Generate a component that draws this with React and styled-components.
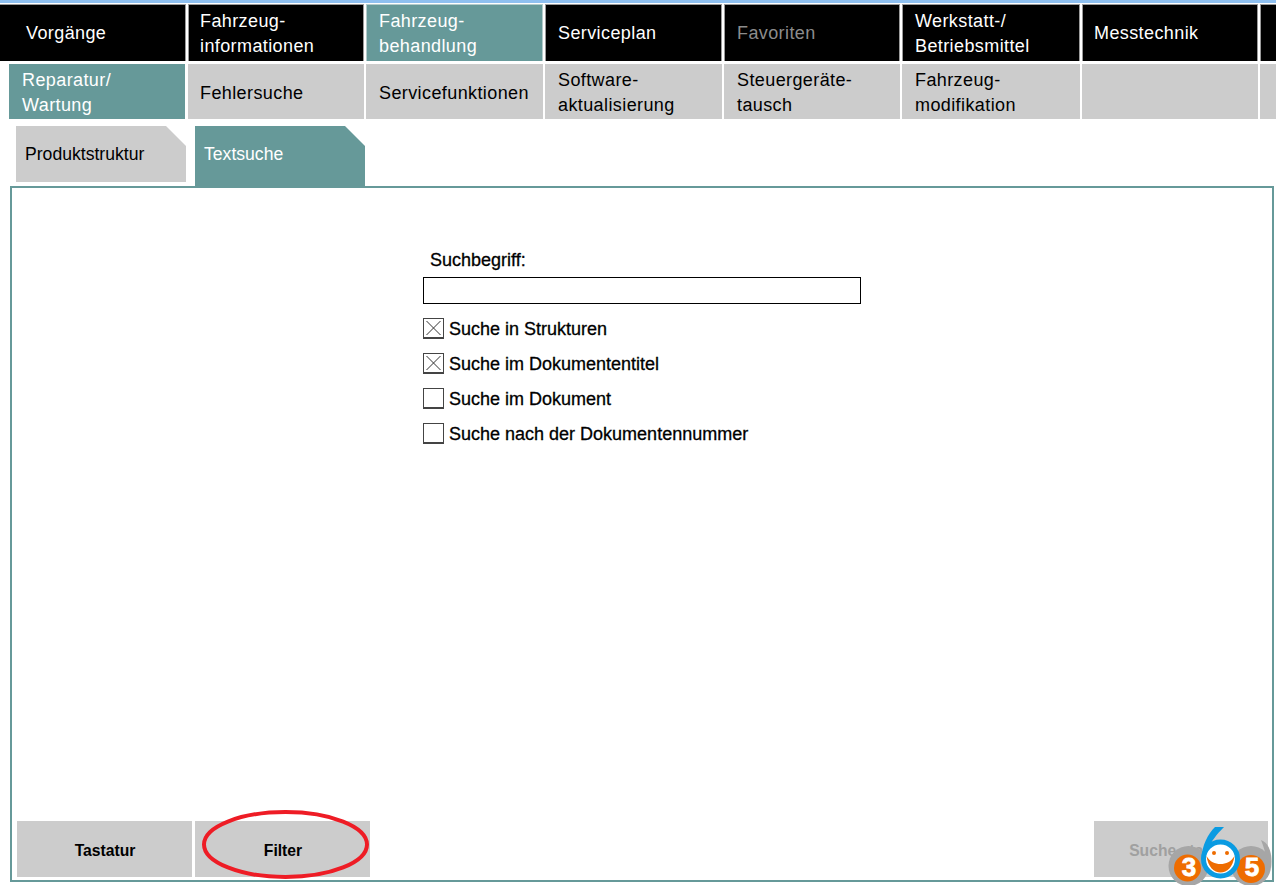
import React from "react";
import styled, { createGlobalStyle } from "styled-components";

const Global = createGlobalStyle`
  html, body { margin: 0; padding: 0; background: #fff; overflow: hidden; }
  body { font-family: "Liberation Sans", Arial, sans-serif; color: #000; }
`;

const widths = "188px 178px 179px 179px 178px 180px 178px 178px";

const Page = styled.div`
  position: relative;
  width: 1276px;
  height: 885px;
  overflow: hidden;
  display: flex;
  flex-direction: column;
  border-top: 3px solid #8fc0f0;
  box-sizing: border-box;
`;

const MainNav = styled.nav`
  display: grid;
  grid-template-columns: ${widths};
  height: 57px;
  margin-top: 1px;
`;

const MainItem = styled.div`
  margin-right: 2px;
  background: ${(p) => (p.$active ? "#669999" : "#000")};
  color: ${(p) => (p.$muted ? "#8c8c8c" : "#fff")};
  font-size: 18px;
  letter-spacing: 0.4px;
  line-height: 25px;
  padding: 1px 0 0 ${(p) => (p.$first ? "26px" : p.$inset ? "12px" : "11px")};
  display: flex;
  align-items: center;
  white-space: pre-line;
  border: 1px solid ${(p) => (p.$active ? "#b5cccc" : "#9a9a9a")};
  border-bottom: none;
  border-left-width: ${(p) => (p.$first ? "0" : "1px")};
  box-sizing: border-box;
`;

const SubNav = styled.nav`
  display: grid;
  grid-template-columns: ${widths};
  height: 55px;
  margin-top: 3px;
`;

const SubItem = styled.div`
  margin-right: ${(p) => (p.$first ? "3px" : "2px")};
  margin-left: ${(p) => (p.$first ? "9px" : "0")};
  background: ${(p) => (p.$active ? "#669999" : "#cccccc")};
  color: ${(p) => (p.$active ? "#fff" : "#000")};
  font-size: 18px;
  letter-spacing: 0.4px;
  line-height: 25px;
  padding: 3px 0 0 ${(p) => (p.$first ? "13px" : p.$inset ? "13px" : "12px")};
  display: flex;
  align-items: center;
  white-space: pre-line;
  box-sizing: border-box;
`;

const Tabs = styled.div`
  display: flex;
  align-items: flex-start;
  height: 66px;
  margin-top: 7px;
  padding-left: 16px;
  gap: 9px;
`;

const Tab = styled.div`
  width: 170px;
  height: ${(p) => (p.$active ? "60px" : "56px")};
  background: ${(p) => (p.$active ? "#669999" : "#cccccc")};
  color: ${(p) => (p.$active ? "#fff" : "#000")};
  clip-path: polygon(0 0, 150px 0, 170px 20px, 170px 100%, 0 100%);
  font-size: 17.6px;
  line-height: 18px;
  padding: 19px 0 0 9px;
  box-sizing: border-box;
`;

const Panel = styled.main`
  width: 1264px;
  height: 696px;
  margin-left: 10px;
  margin-top: -6px;
  border: 2px solid #669999;
  box-sizing: border-box;
  display: flex;
  flex-direction: column;
  padding: 63px 4px 3px 5px;
  background: #fff;
`;

const Form = styled.form`
  margin-left: 406px;
  display: flex;
  flex-direction: column;
  font-size: 18px;
`;

const Label = styled.label`
  margin-left: 7px;
  line-height: 18px;
  -webkit-text-stroke: 0.3px #000;
`;

const SearchInput = styled.div`
  width: 438px;
  height: 27px;
  margin-top: 8px;
  margin-bottom: 13px;
  border: 1px solid #000;
  box-sizing: border-box;
`;

const CheckRow = styled.div`
  display: flex;
  align-items: center;
  gap: 5px;
  height: 22px;
  margin-bottom: 13px;
`;

const CheckText = styled.span`
  line-height: 18px;
  padding-top: 2px;
  -webkit-text-stroke: 0.3px #000;
`;

const Box = styled.span`
  width: 21px;
  height: 21px;
  border: 1px solid #444;
  border-bottom-width: 2px;
  box-sizing: border-box;
  display: flex;
  background: #fff;
`;

const Actions = styled.div`
  margin-top: auto;
  display: flex;
  gap: 3px;
`;

const ActionButton = styled.div`
  width: ${(p) => (p.$right ? "174px" : "175px")};
  height: 56px;
  background: #cccccc;
  color: ${(p) => (p.$disabled ? "#a0a0a0" : "#000")};
  font-size: 15.7px;
  font-weight: 700;
  display: flex;
  align-items: flex-end;
  justify-content: center;
  padding: 0 0 18px ${(p) => (p.$right ? "0" : "1px")};
  box-sizing: border-box;
  line-height: 17px;
  margin-left: ${(p) => (p.$right ? "auto" : "0")};
`;

const EllipseOverlay = styled.svg`
  position: absolute;
  left: 200px;
  top: 802px;
  pointer-events: none;
`;

const LogoOverlay = styled.svg`
  position: absolute;
  left: 1165px;
  top: 820px;
  pointer-events: none;
`;

const LogoDigit = styled.text`
  font-family: "Liberation Sans", Arial, sans-serif;
  font-weight: 700;
  font-size: 26px;
  fill: #fff;
  stroke: #fff;
  stroke-width: 0.8px;
  text-anchor: middle;
`;

const main = [
  "Vorgänge", "Fahrzeug-\ninformationen", "Fahrzeug-\nbehandlung", "Serviceplan",
  "Favoriten", "Werkstatt-/\nBetriebsmittel", "Messtechnik", "",
];
const sub = [
  "Reparatur/\nWartung", "Fehlersuche", "Servicefunktionen", "Software-\naktualisierung",
  "Steuergeräte-\ntausch", "Fahrzeug-\nmodifikation", "", "",
];
const checks = [
  ["Suche in Strukturen", true],
  ["Suche im Dokumententitel", true],
  ["Suche im Dokument", false],
  ["Suche nach der Dokumentennummer", false],
];

const isInset = (i) => i >= 2 && i <= 5;

const Cross = () => (
  <svg width="19" height="18" viewBox="0 0 19 18">
    <path d="M2.5 2L16.5 16M16.5 2L2.5 16" stroke="#333" strokeWidth="1" fill="none" />
  </svg>
);

export default function App() {
  return (
    <Page>
      <Global />
      <MainNav>
        {main.map((t, i) => (
          <MainItem key={i} $first={i === 0} $inset={isInset(i)} $active={i === 2} $muted={i === 4}>{t}</MainItem>
        ))}
      </MainNav>
      <SubNav>
        {sub.map((t, i) => (
          <SubItem key={i} $first={i === 0} $inset={isInset(i)} $active={i === 0}>{t}</SubItem>
        ))}
      </SubNav>
      <Tabs>
        <Tab>Produktstruktur</Tab>
        <Tab $active>Textsuche</Tab>
      </Tabs>
      <Panel>
        <Form>
          <Label>Suchbegriff:</Label>
          <SearchInput />
          {checks.map(([t, on]) => (
            <CheckRow key={t}>
              <Box>{on && <Cross />}</Box>
              <CheckText>{t}</CheckText>
            </CheckRow>
          ))}
        </Form>
        <Actions>
          <ActionButton>Tastatur</ActionButton>
          <ActionButton>Filter</ActionButton>
          <ActionButton $right $disabled>Suche starten</ActionButton>
        </Actions>
      </Panel>
      <EllipseOverlay width="175" height="80" viewBox="0 0 175 80">
        <ellipse cx="85.5" cy="39.5" rx="81.5" ry="32.5" fill="none" stroke="#ee1c25" strokeWidth="4" />
      </EllipseOverlay>
      <LogoOverlay width="111" height="65" viewBox="0 0 111 65">
        <circle cx="23.5" cy="43" r="20" fill="#a6a6a6" />
        <circle cx="86" cy="43" r="20" fill="#a6a6a6" />
        <circle cx="22.5" cy="45" r="13.5" fill="#ee6c00" />
        <circle cx="86" cy="46" r="14" fill="#ee6c00" />
        <path d="M96 17C104 20 108 30 106 46L101 34C100 28 98 22 96 17Z" fill="#a6a6a6" />
        <LogoDigit x="24" y="53">3</LogoDigit>
        <LogoDigit x="87" y="53">5</LogoDigit>
        <circle cx="55.5" cy="36" r="17" fill="#fff" stroke="#0a9be2" strokeWidth="5" />
        <path d="M36.5 36C37 22 43 11 50 4H59C52 11 46 18 42.5 28Z" fill="#0a9be2" />
        <circle cx="49" cy="30" r="2" fill="#ee6c00" />
        <circle cx="62" cy="30" r="2" fill="#ee6c00" />
        <path d="M41.5 33C43 44 49 49.5 55.5 49.5C62 49.5 68 44 69.5 33C66 39 61 41 55.5 41C50 41 45 39 41.5 33Z" fill="#ee6c00" />
      </LogoOverlay>
    </Page>
  );
}
